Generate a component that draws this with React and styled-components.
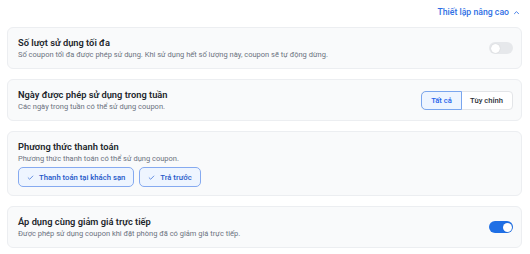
import styled, { createGlobalStyle } from "styled-components";

const Global = createGlobalStyle`
  body {
    margin: 0;
    background: #ffffff;
    font-family: Roboto, "Noto Sans", sans-serif;
  }
`;

const Page = styled.div`
  padding: 6px 8px 0 7px;
  display: flex;
  flex-direction: column;
`;

const AdvancedLink = styled.button`
  align-self: flex-end;
  display: flex;
  align-items: center;
  gap: 4px;
  border: 0;
  background: none;
  padding: 0 2px 0 0;
  font-family: inherit;
  font-size: 8.7px;
  font-weight: 500;
  line-height: 13px;
  color: #2f6fe4;
  margin-bottom: 8px;
  cursor: pointer;
`;

const Cards = styled.div`
  display: flex;
  flex-direction: column;
  gap: 10px;
`;

const Card = styled.div`
  background: #f9fafb;
  border: 1px solid #eceef1;
  border-radius: 6px;
  padding: 8px 8px 8px 10px;
  display: flex;
  align-items: ${(p) => (p.$stack ? "stretch" : "center")};
  flex-direction: ${(p) => (p.$stack ? "column" : "row")};
  justify-content: space-between;
`;

const Info = styled.div`
  display: flex;
  flex-direction: column;
`;

const Title = styled.div`
  font-size: 9.3px;
  font-weight: 600;
  line-height: 13px;
  color: #22262c;
`;

const Desc = styled.div`
  font-size: 7.5px;
  line-height: 11px;
  color: #6b7280;
`;

const Switch = styled.div`
  width: 24px;
  height: 12px;
  border-radius: 6px;
  background: ${(p) => (p.$on ? "#1f6fe5" : "#e6e8eb")};
  position: relative;
  flex-shrink: 0;
  &::after {
    content: "";
    position: absolute;
    top: 1.5px;
    left: ${(p) => (p.$on ? "13.5px" : "1.5px")};
    width: 9px;
    height: 9px;
    border-radius: 50%;
    background: #ffffff;
    box-shadow: 0 0 1px rgba(0, 0, 0, 0.2);
  }
`;

const Segmented = styled.div`
  display: flex;
  border: 1px solid #e3e5e8;
  border-radius: 4px;
  background: #ffffff;
`;

const Segment = styled.div`
  height: 17px;
  width: ${(p) => p.$w}px;
  display: flex;
  align-items: center;
  justify-content: center;
  font-size: 7.6px;
  font-weight: 500;
  color: ${(p) => (p.$active ? "#2563eb" : "#2b2f36")};
  background: ${(p) => (p.$active ? "#eef5ff" : "transparent")};
  outline: ${(p) => (p.$active ? "1px solid #7aa6ee" : "none")};
  border-radius: ${(p) => (p.$active ? "4px 0 0 4px" : "0")};
`;

const Chips = styled.div`
  display: flex;
  gap: 5px;
  margin-top: 3px;
`;

const Chip = styled.div`
  height: 18px;
  padding: 0 8px;
  display: flex;
  align-items: center;
  gap: 5px;
  border: 1px solid #86aaf0;
  border-radius: 5px;
  background: #eef5ff;
  font-size: 7.7px;
  font-weight: 500;
  color: #2458c9;
`;

const Check = () => (
  <svg width="7" height="7" viewBox="0 0 12 12" fill="none">
    <path d="M2 6.5l2.6 2.5L10 3.5" stroke="#4a7bdc" strokeWidth="1.4" strokeLinecap="round" strokeLinejoin="round" />
  </svg>
);

const ChevronUp = () => (
  <svg width="7" height="7" viewBox="0 0 12 12" fill="none">
    <path d="M2.5 8l3.5-3.5L9.5 8" stroke="#2f6fe4" strokeWidth="1.5" strokeLinecap="round" strokeLinejoin="round" />
  </svg>
);

export default function App() {
  return (
    <Page>
      <Global />
      <AdvancedLink>
        Thiết lập nâng cao <ChevronUp />
      </AdvancedLink>
      <Cards>
        <Card>
          <Info>
            <Title>Số lượt sử dụng tối đa</Title>
            <Desc>Số coupon tối đa được phép sử dụng. Khi sử dụng hết số lượng này, coupon sẽ tự động dừng.</Desc>
          </Info>
          <Switch />
        </Card>
        <Card>
          <Info>
            <Title>Ngày được phép sử dụng trong tuần</Title>
            <Desc>Các ngày trong tuần có thể sử dụng coupon.</Desc>
          </Info>
          <Segmented>
            <Segment $active $w={39}>Tất cả</Segment>
            <Segment $w={51}>Tùy chỉnh</Segment>
          </Segmented>
        </Card>
        <Card $stack>
          <Title>Phương thức thanh toán</Title>
          <Desc>Phương thức thanh toán có thể sử dụng coupon.</Desc>
          <Chips>
            <Chip>
              <Check />
              Thanh toán tại khách sạn
            </Chip>
            <Chip>
              <Check />
              Trả trước
            </Chip>
          </Chips>
        </Card>
        <Card>
          <Info>
            <Title>Áp dụng cùng giảm giá trực tiếp</Title>
            <Desc>Được phép sử dụng coupon khi đặt phòng đã có giảm giá trực tiếp.</Desc>
          </Info>
          <Switch $on />
        </Card>
      </Cards>
    </Page>
  );
}
